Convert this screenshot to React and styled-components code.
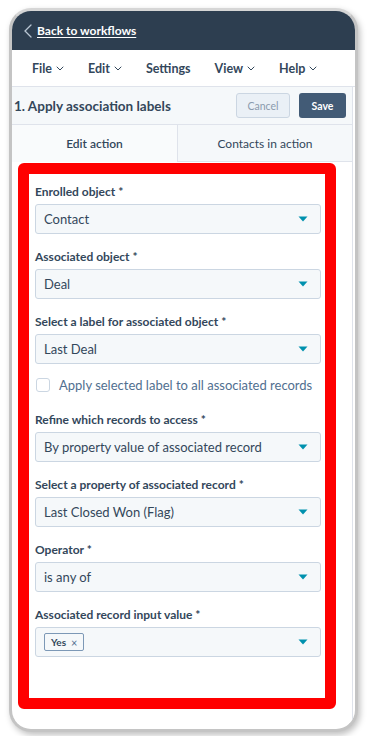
import styled, { createGlobalStyle } from "styled-components";

const GlobalStyle = createGlobalStyle`
    html, body {
        margin: 0;
        padding: 0;
        background: #ffffff;
    }
    body {
        font-family: "Lato", "Noto Sans", sans-serif;
        color: #33475b;
    }
`;

const menus = [
    { name: "File", caret: true },
    { name: "Edit", caret: true },
    { name: "Settings", caret: false },
    { name: "View", caret: true },
    { name: "Help", caret: true },
];

const fields = [
    { label: "Enrolled object *", value: "Contact" },
    { label: "Associated object *", value: "Deal" },
    { label: "Select a label for associated object *", value: "Last Deal", checkbox: true },
    { label: "Refine which records to access *", value: "By property value of associated record" },
    { label: "Select a property of associated record *", value: "Last Closed Won (Flag)" },
    { label: "Operator *", value: "is any of" },
    { label: "Associated record input value *", tag: "Yes" },
];

function Caret() {
    return (
        <svg width="8" height="5" viewBox="0 0 8 5">
            <path d="M1 1 L4 4 L7 1" fill="none" stroke="#33475b" strokeWidth="1" strokeLinecap="round" />
        </svg>
    );
}

function DropArrow() {
    return (
        <svg width="10" height="6" viewBox="0 0 10 6">
            <path d="M0.5 0.5 L9.5 0.5 L5 5.5 Z" fill="#0091ae" />
        </svg>
    );
}

function App() {
    return (
        <>
            <GlobalStyle />
            <Page>
                <Phone>
                    <TopBar>
                        <svg width="8" height="14" viewBox="0 0 8 14">
                            <path d="M7 1 L1 7 L7 13" fill="none" stroke="#b9c6d3" strokeWidth="1.3" strokeLinecap="round" />
                        </svg>
                        <BackLink>Back to workflows</BackLink>
                    </TopBar>

                    <MenuBar>
                        {menus.map((m) => (
                            <MenuItem key={m.name}>
                                {m.name}
                                {m.caret && <Caret />}
                            </MenuItem>
                        ))}
                    </MenuBar>

                    <Panel>
                        <TitleRow>
                            <Title>1. Apply association labels</Title>
                            <CancelButton>Cancel</CancelButton>
                            <SaveButton>Save</SaveButton>
                        </TitleRow>

                        <Tabs>
                            <Tab $active>Edit action</Tab>
                            <Tab>Contacts in action</Tab>
                        </Tabs>

                        <Highlight>
                            <Form>
                                {fields.map((f) => (
                                    <div key={f.label}>
                                        <FieldLabel>{f.label}</FieldLabel>
                                        <Select>
                                            {f.tag ? (
                                                <Tag>
                                                    {f.tag}
                                                    <TagClose>×</TagClose>
                                                </Tag>
                                            ) : (
                                                <SelectValue>{f.value}</SelectValue>
                                            )}
                                            <DropArrow />
                                        </Select>
                                        {f.checkbox && (
                                            <CheckRow>
                                                <CheckBox />
                                                <CheckText>Apply selected label to all associated records</CheckText>
                                            </CheckRow>
                                        )}
                                    </div>
                                ))}
                            </Form>
                        </Highlight>
                    </Panel>
                </Phone>
            </Page>
        </>
    );
}

const Page = styled.div`
    width: 372px;
    height: 736px;
    padding: 8px 14px 10px 9px;
    box-sizing: border-box;
`;

const Phone = styled.div`
    height: 100%;
    border: 3px solid #c4c4c4;
    border-top-color: #d6d6d6;
    border-radius: 22px;
    overflow: hidden;
    background: #ffffff;
    box-shadow: 2px 3px 6px rgba(0, 0, 0, 0.25);
    display: flex;
    flex-direction: column;
`;

const TopBar = styled.div`
    height: 39px;
    background: #2d3e50;
    display: flex;
    align-items: center;
    padding: 0 0 0 12px;
    gap: 5px;
    flex-shrink: 0;
`;

const BackLink = styled.span`
    color: #ffffff;
    font-weight: 700;
    font-size: 12px;
    text-decoration: underline;
    text-underline-offset: 2px;
`;

const MenuBar = styled.div`
    height: 36px;
    display: flex;
    align-items: center;
    padding: 0 0 0 20px;
    border-bottom: 1px solid #dfe3eb;
    flex-shrink: 0;
`;

const MenuItem = styled.div`
    display: flex;
    align-items: center;
    gap: 4px;
    font-size: 12.5px;
    font-weight: 700;
    color: #33475b;
    margin-right: 24px;
    &:last-child {
        margin-right: 0;
    }
`;

const Panel = styled.div`
    flex: 1;
    display: flex;
    flex-direction: column;
    border-right: 1px solid #dfe3eb;
    margin-right: 2px;
`;

const TitleRow = styled.div`
    height: 37px;
    display: flex;
    align-items: center;
    padding: 0 6px 0 2px;
    background: #f5f8fa;
    border-bottom: 1px solid #dfe3eb;
`;

const Title = styled.div`
    flex: 1;
    font-size: 13.5px;
    font-weight: 700;
    color: #33475b;
`;

const CancelButton = styled.div`
    width: 54px;
    height: 25px;
    box-sizing: border-box;
    border: 1px solid #cbd6e2;
    border-radius: 3px;
    background: #eaf0f6;
    color: #8a9bae;
    font-size: 10.5px;
    display: flex;
    align-items: center;
    justify-content: center;
    margin-right: 9px;
`;

const SaveButton = styled.div`
    width: 47px;
    height: 25px;
    border-radius: 3px;
    background: #425b76;
    color: #ffffff;
    font-size: 10.5px;
    font-weight: 700;
    display: flex;
    align-items: center;
    justify-content: center;
`;

const Tabs = styled.div`
    display: flex;
    height: 37px;
`;

const Tab = styled.div`
    flex: ${(p) => (p.$active ? "0 0 165px" : "1")};
    display: flex;
    align-items: center;
    justify-content: center;
    font-size: 12px;
    color: #33475b;
    font-weight: ${(p) => (p.$active ? 600 : 400)};
    background: ${(p) => (p.$active ? "#f9fbfc" : "#f5f8fa")};
    border-left: ${(p) => (p.$active ? "none" : "1px solid #dfe3eb")};
    border-bottom: ${(p) => (p.$active ? "1px solid transparent" : "1px solid #dfe3eb")};
`;

const Highlight = styled.div`
    margin: 1px 16px 0 6px;
    border: 11px solid #ff0000;
    border-radius: 6px;
    background: #ffffff;
`;

const Form = styled.div`
    padding: 10px 4px 26px 6px;
`;

const FieldLabel = styled.div`
    font-size: 12px;
    font-weight: 700;
    color: #33475b;
    line-height: 16px;
    margin-bottom: 4px;
    white-space: nowrap;
`;

const Select = styled.div`
    height: 30px;
    box-sizing: border-box;
    border: 1px solid #cbd6e2;
    border-radius: 3px;
    background: #f5f8fa;
    display: flex;
    align-items: center;
    justify-content: space-between;
    padding: 0 12px 0 8px;
    margin-bottom: 15px;
`;

const SelectValue = styled.span`
    font-size: 13px;
    color: #33475b;
`;

const Tag = styled.span`
    display: flex;
    align-items: center;
    gap: 5px;
    height: 18px;
    box-sizing: border-box;
    padding: 0 6px;
    border: 1px solid #7c98b6;
    border-radius: 2px;
    background: #f5f8fa;
    font-size: 10px;
    font-weight: 700;
    color: #33475b;
`;

const TagClose = styled.span`
    font-weight: 400;
    font-size: 11px;
    color: #516f90;
`;

const CheckRow = styled.div`
    display: flex;
    align-items: center;
    gap: 9px;
    height: 16px;
    margin: -2px 0 19px 1px;
`;

const CheckBox = styled.div`
    width: 14px;
    height: 14px;
    box-sizing: border-box;
    border: 1px solid #cbd6e2;
    border-radius: 3px;
    background: #ffffff;
`;

const CheckText = styled.span`
    font-size: 13px;
    color: #516f90;
    white-space: nowrap;
`;

export default App;
